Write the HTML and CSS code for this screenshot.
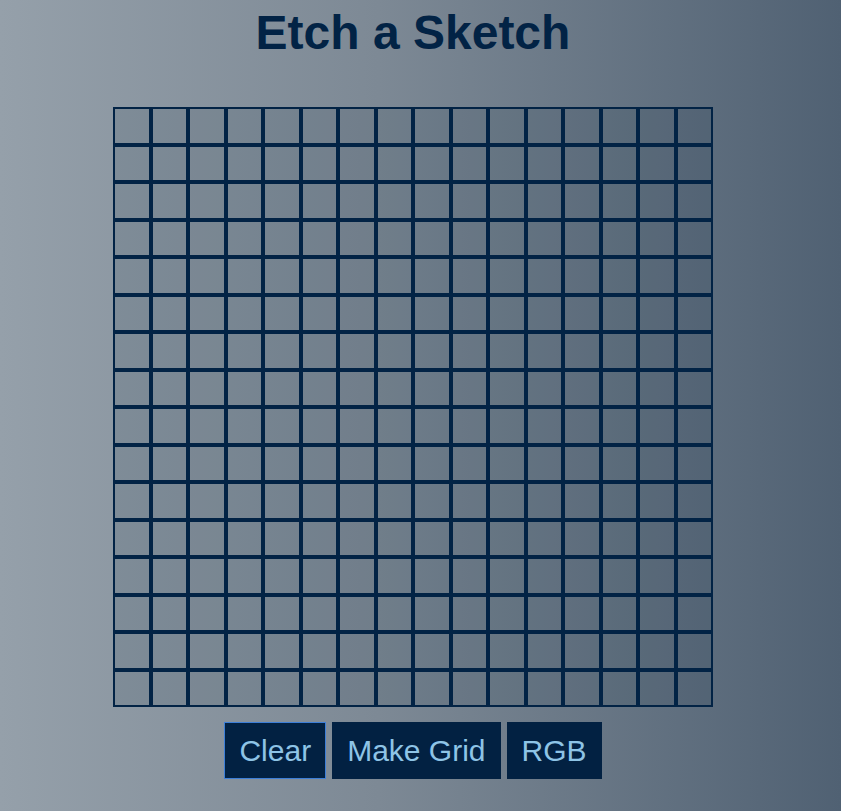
FILE: index.html
```html
<!DOCTYPE html>
<html lang="en">
<head>
<meta charset="utf-8">
<title>Etch a Sketch</title>
<link rel="stylesheet" href="styles.css">
</head>
<body>
<main class="page">
  <h1 class="title">Etch a Sketch</h1>
  <div class="grid" id="grid"></div>
  <div class="controls">
    <button class="btn btn-active" type="button">Clear</button>
    <button class="btn" type="button">Make Grid</button>
    <button class="btn" type="button">RGB</button>
  </div>
</main>
<script src="script.js"></script>
</body>
</html>
```

FILE: styles.css
```css
html, body {
  margin: 0;
  height: 100%;
}

body {
  background: linear-gradient(to right, #95a0aa 0%, #7d8995 45%, #506173 100%);
  font-family: "Liberation Sans", Arial, sans-serif;
  overflow: hidden;
}

.page {
  box-sizing: border-box;
  width: 826px;
  display: flex;
  flex-direction: column;
  align-items: center;
}

.title {
  margin: 5px 0 0;
  font-size: 48px;
  font-weight: bold;
  color: #022345;
  line-height: 55px;
}

.grid {
  margin-top: 47px;
  width: 600px;
  height: 600px;
  display: grid;
  grid-template-columns: repeat(16, 1fr);
  grid-template-rows: repeat(16, 1fr);
  background: rgba(0, 25, 50, 0.1);
}

.cell {
  box-sizing: border-box;
  border: 2px solid #022345;
}

.controls {
  margin-top: 15px;
  display: flex;
  gap: 6px;
}

.btn {
  font-family: "Liberation Sans", Arial, sans-serif;
  font-size: 30px;
  line-height: 35px;
  padding: 10px 14px;
  background: #022142;
  color: #8ec4e6;
  border: 1px solid #022142;
  border-radius: 0;
  margin: 0;
}

.btn-active {
  border-color: #3d7fd8;
}
```

FILE: script.js
```js
const grid = document.getElementById('grid');
for (let i = 0; i < 256; i++) {
  const cell = document.createElement('div');
  cell.className = 'cell';
  grid.appendChild(cell);
}
```
